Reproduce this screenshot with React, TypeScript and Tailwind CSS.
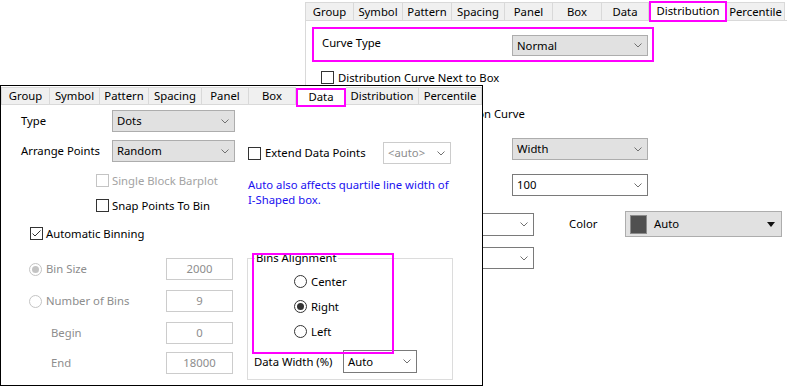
import React from "react";

type Tab = { label: string; w: string; selected?: boolean };

function TabStrip({ tabs, strip, tab, sel }: { tabs: Tab[]; strip: string; tab: string; sel: string }) {
  return (
    <div className={`flex items-end shrink-0 border-b border-[#d9d9d9] ${strip}`}>
      {tabs.map((t, i) =>
        t.selected ? (
          <div key={t.label} className={`${t.w} ${sel} border-2 border-[#ff00ff] bg-white flex justify-center relative z-10 shrink-0`}>
            {t.label}
          </div>
        ) : (
          <div
            key={t.label}
            className={`${t.w} ${tab} ${i === 0 ? "border-l" : ""} border-t border-r border-[#d9d9d9] bg-[#f0f0f0] flex items-center justify-center shrink-0`}
          >
            {t.label}
          </div>
        )
      )}
    </div>
  );
}

function Chevron() {
  return (
    <svg width="8" height="5" viewBox="0 0 8 5" className="shrink-0">
      <polyline points="0.5,0.5 4,4 7.5,0.5" fill="none" stroke="#707070" strokeWidth="1" />
    </svg>
  );
}

function Dropdown({ className, text, variant }: { className: string; text: string; variant: "gray" | "white" | "disabled" }) {
  const v =
    variant === "gray"
      ? "bg-[#e1e1e1] border-[#adadad]"
      : variant === "disabled"
      ? "bg-white border-[#cccccc] text-[#8d8d8d]"
      : "bg-white border-[#7a7a7a]";
  return (
    <div className={`flex items-center justify-between border pl-[4px] pr-[5px] shrink-0 ${v} ${className}`}>
      <span>{text}</span>
      <Chevron />
    </div>
  );
}

function Checkbox({ checked, disabled }: { checked?: boolean; disabled?: boolean }) {
  return (
    <div
      className={`w-[13px] h-[13px] border ${disabled ? "border-[#c4c4c4]" : "border-[#333333]"} bg-white shrink-0 flex items-center justify-center`}
    >
      {checked && (
        <svg width="11" height="11" viewBox="0 0 11 11">
          <polyline points="1.5,5.5 4,8 9.5,2.5" fill="none" stroke="#333333" strokeWidth="1" />
        </svg>
      )}
    </div>
  );
}

function Radio({ checked, disabled }: { checked?: boolean; disabled?: boolean }) {
  return (
    <div
      className={`w-[13px] h-[13px] rounded-full border ${disabled ? "border-[#c4c4c4]" : "border-[#333333]"} bg-white shrink-0 flex items-center justify-center`}
    >
      {checked && <div className={`w-[7px] h-[7px] rounded-full ${disabled ? "bg-[#c4c4c4]" : "bg-[#333333]"}`} />}
    </div>
  );
}

function TextBox({ text }: { text: string }) {
  return (
    <div className="w-[67px] h-[22px] border border-[#cccccc] bg-white flex items-center justify-center text-[#8d8d8d] shrink-0">
      {text}
    </div>
  );
}

const backTabs: Tab[] = [
  { label: "Group", w: "w-[49px]" },
  { label: "Symbol", w: "w-[49px]" },
  { label: "Pattern", w: "w-[49px]" },
  { label: "Spacing", w: "w-[53px]" },
  { label: "Panel", w: "w-[48px]" },
  { label: "Box", w: "w-[49px]" },
  { label: "Data", w: "w-[47px]" },
  { label: "Distribution", w: "w-[78px]", selected: true },
  { label: "Percentile", w: "w-[58px]" },
];

const frontTabs: Tab[] = [
  { label: "Group", w: "w-[49px]" },
  { label: "Symbol", w: "w-[50px]" },
  { label: "Pattern", w: "w-[49px]" },
  { label: "Spacing", w: "w-[53px]" },
  { label: "Panel", w: "w-[47px]" },
  { label: "Box", w: "w-[47px]" },
  { label: "Data", w: "w-[50px]", selected: true },
  { label: "Distribution", w: "w-[73px]" },
  { label: "Percentile", w: "w-[63px]" },
];

export default function App() {
  return (
    <div className="relative w-[787px] h-[386px] bg-white overflow-hidden font-['Noto_Sans',sans-serif] text-[11.3px] leading-[14px] text-black">
      {/* Back dialog: Distribution tab */}
      <div className="absolute left-[305px] top-0 w-[482px] h-[386px] flex flex-col bg-white">
        <TabStrip tabs={backTabs} strip="h-[21px]" tab="h-[18px]" sel="h-[21px] -mb-[2px] pt-[1px]" />
        <div className="flex-1 border-l border-[#d9d9d9] flex flex-col">
          <div className="mt-[6px] ml-[6px] w-[342px] h-[35px] border-2 border-[#ff00ff] flex items-center pl-[8px]">
            <span className="w-[190px] -mt-[3px]">Curve Type</span>
            <Dropdown className="w-[136px] h-[21px] mt-[2px]" text="Normal" variant="gray" />
          </div>
          <div className="mt-[9px] ml-[15px] h-[13px] flex items-center gap-[4px]">
            <Checkbox />
            <span>Distribution Curve Next to Box</span>
          </div>
          <div className="mt-[23px] ml-[24px] h-[13px] flex items-center gap-[4px]">
            <Checkbox />
            <span>Fill Area Under Distribution Curve</span>
          </div>
          <div className="mt-[18px] pl-[206px] h-[22px] flex items-center">
            <Dropdown className="w-[136px] h-[22px]" text="Width" variant="gray" />
          </div>
          <div className="mt-[14px] pl-[206px] h-[22px] flex items-center">
            <Dropdown className="w-[136px] h-[22px]" text="100" variant="white" />
          </div>
          <div className="mt-[15px] h-[26px] flex items-center">
            <Dropdown className="ml-[114px] w-[114px] h-[23px]" text="" variant="white" />
            <span className="ml-[35px] w-[56px]">Color</span>
            <div className="w-[157px] h-[26px] border border-[#adadad] bg-[#e1e1e1] flex items-center pl-[4px] pr-[6px]">
              <div className="w-[17px] h-[19px] bg-[#505050] border border-[#8c8c8c]" />
              <span className="ml-[7px] flex-1">Auto</span>
              <svg width="8" height="5" viewBox="0 0 8 5">
                <polygon points="0,0 8,0 4,5" fill="#111111" />
              </svg>
            </div>
          </div>
          <div className="mt-[10px] h-[22px] flex items-center">
            <Dropdown className="ml-[114px] w-[114px] h-[22px]" text="" variant="white" />
          </div>
        </div>
      </div>

      {/* Front dialog: Data tab */}
      <div className="absolute left-0 top-[85px] w-[483px] h-[301px] border border-black bg-white flex flex-col z-20">
        <TabStrip tabs={frontTabs} strip="h-[19px]" tab="h-[17px]" sel="h-[19px] -mb-[3px]" />
        <div className="flex">
          <div className="w-[247px] flex flex-col shrink-0">
            <div className="mt-[5px] h-[22px] flex items-center pl-[20px]">
              <span className="w-[91px]">Type</span>
              <Dropdown className="w-[123px] h-[22px]" text="Dots" variant="gray" />
            </div>
            <div className="mt-[8px] h-[22px] flex items-center pl-[20px]">
              <span className="w-[91px]">Arrange Points</span>
              <Dropdown className="w-[123px] h-[22px]" text="Random" variant="gray" />
            </div>
            <div className="mt-[12px] h-[13px] flex items-center pl-[95px] gap-[3px] text-[#a3a3a3]">
              <Checkbox disabled />
              <span>Single Block Barplot</span>
            </div>
            <div className="mt-[12px] h-[13px] flex items-center pl-[95px] gap-[3px]">
              <Checkbox />
              <span>Snap Points To Bin</span>
            </div>
            <div className="mt-[15px] h-[13px] flex items-center pl-[29px] gap-[3px]">
              <Checkbox checked />
              <span>Automatic Binning</span>
            </div>
          </div>
          <div className="flex flex-col">
            <div className="mt-[37px] h-[22px] flex items-center">
              <div className="w-[135px] flex items-center gap-[4px]">
                <Checkbox />
                <span>Extend Data Points</span>
              </div>
              <Dropdown className="w-[68px] h-[22px]" text="<auto>" variant="disabled" />
            </div>
            <div className="mt-[13px] leading-[15px] text-[#2010f0]">
              Auto also affects quartile line width of
              <br />
              I-Shaped box.
            </div>
          </div>
        </div>
        <div className="flex">
          <div className="w-[246px] flex flex-col shrink-0 text-[#8d8d8d]">
            <div className="mt-[18px] h-[22px] flex items-center pl-[28px]">
              <div className="w-[137px] flex items-center gap-[4px]">
                <Radio checked disabled />
                <span>Bin Size</span>
              </div>
              <TextBox text="2000" />
            </div>
            <div className="mt-[10px] h-[22px] flex items-center pl-[28px]">
              <div className="w-[137px] flex items-center gap-[4px]">
                <Radio disabled />
                <span>Number of Bins</span>
              </div>
              <TextBox text="9" />
            </div>
            <div className="mt-[10px] h-[22px] flex items-center pl-[50px]">
              <span className="w-[115px]">Begin</span>
              <TextBox text="0" />
            </div>
            <div className="mt-[8px] h-[22px] flex items-center pl-[50px]">
              <span className="w-[115px]">End</span>
              <TextBox text="18000" />
            </div>
          </div>
          <div className="relative mt-[18px] w-[206px] h-[122px] border border-[#dcdcdc] flex flex-col">
            <div className="-mt-[8px] ml-[7px] w-fit h-[14px] bg-white px-[1px] relative z-10">Bins Alignment</div>
            <div className="mt-[10px] ml-[46px] h-[13px] flex items-center gap-[4px]">
              <Radio />
              <span>Center</span>
            </div>
            <div className="mt-[12px] ml-[46px] h-[13px] flex items-center gap-[4px]">
              <Radio checked />
              <span>Right</span>
            </div>
            <div className="mt-[12px] ml-[46px] h-[13px] flex items-center gap-[4px]">
              <Radio />
              <span>Left</span>
            </div>
            <div className="mt-[12px] ml-[6px] h-[23px] flex items-center">
              <span className="w-[89px]">Data Width (%)</span>
              <Dropdown className="w-[74px] h-[23px]" text="Auto" variant="white" />
            </div>
            <div className="absolute left-[4px] -top-[6px] w-[142px] h-[101px] border-2 border-[#ff00ff] z-20" />
          </div>
        </div>
      </div>
    </div>
  );
}
